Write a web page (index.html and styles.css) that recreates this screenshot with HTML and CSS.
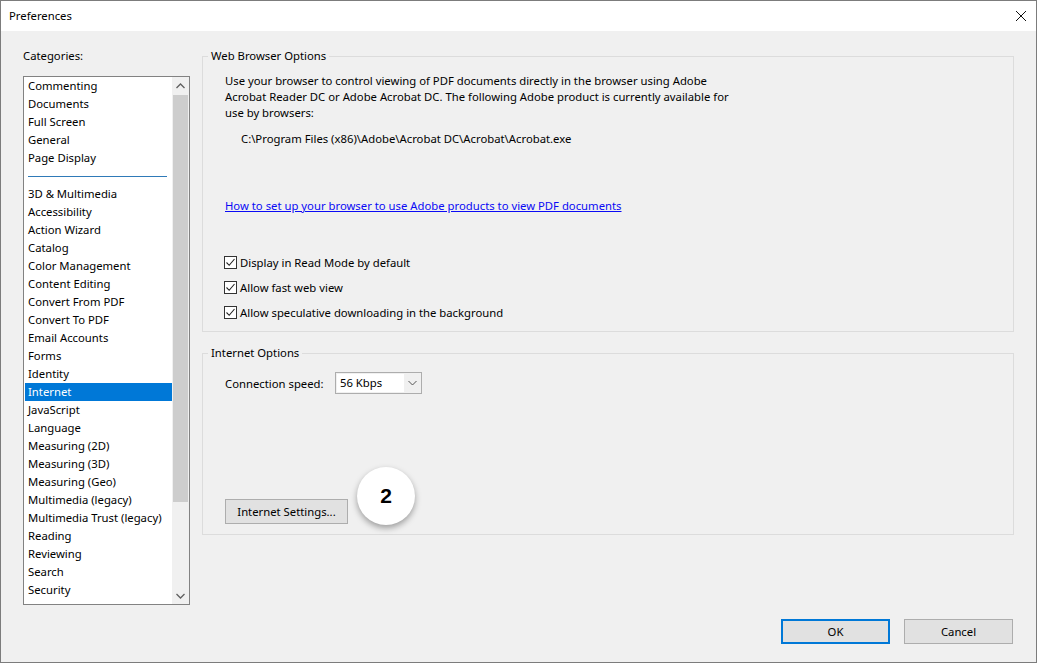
FILE: index.html
```html
<!DOCTYPE html>
<html>
<head>
<meta charset="utf-8">
<link rel="stylesheet" href="styles.css">
</head>
<body>
<div class="window">
  <div class="titlebar">
    <span class="title">Preferences</span>
    <svg class="close" width="12" height="12" viewBox="0 0 12 12"><path d="M1 1 L11 11 M11 1 L1 11" stroke="#111" stroke-width="1" fill="none"/></svg>
  </div>
  <div class="main">
    <div class="leftcol">
      <div class="cat-label">Categories:</div>
      <div class="listbox">
        <div class="items">
          <div class="item">Commenting</div>
          <div class="item">Documents</div>
          <div class="item">Full Screen</div>
          <div class="item">General</div>
          <div class="item">Page Display</div>
          <div class="sep"></div>
          <div class="item">3D &amp; Multimedia</div>
          <div class="item">Accessibility</div>
          <div class="item">Action Wizard</div>
          <div class="item">Catalog</div>
          <div class="item">Color Management</div>
          <div class="item">Content Editing</div>
          <div class="item">Convert From PDF</div>
          <div class="item">Convert To PDF</div>
          <div class="item">Email Accounts</div>
          <div class="item">Forms</div>
          <div class="item">Identity</div>
          <div class="item selected">Internet</div>
          <div class="item">JavaScript</div>
          <div class="item">Language</div>
          <div class="item">Measuring (2D)</div>
          <div class="item">Measuring (3D)</div>
          <div class="item">Measuring (Geo)</div>
          <div class="item">Multimedia (legacy)</div>
          <div class="item">Multimedia Trust (legacy)</div>
          <div class="item">Reading</div>
          <div class="item">Reviewing</div>
          <div class="item">Search</div>
          <div class="item">Security</div>
          <div class="item">Security (Enhanced)</div>
        </div>
        <div class="scrollbar">
          <div class="arrow"><svg width="9" height="6" viewBox="0 0 9 6"><path d="M0.5 5 L4.5 1 L8.5 5" stroke="#606060" stroke-width="1.3" fill="none"/></svg></div>
          <div class="track"><div class="thumb"></div></div>
          <div class="arrow"><svg width="9" height="6" viewBox="0 0 9 6"><path d="M0.5 1 L4.5 5 L8.5 1" stroke="#606060" stroke-width="1.3" fill="none"/></svg></div>
        </div>
      </div>
    </div>
    <div class="rightcol">
      <fieldset class="group group-web">
        <legend>Web Browser Options</legend>
        <p class="desc">Use your browser to control viewing of PDF documents directly in the browser using Adobe<br>Acrobat Reader DC or Adobe Acrobat DC. The following Adobe product is currently available for<br>use by browsers:</p>
        <p class="path">C:\Program Files (x86)\Adobe\Acrobat DC\Acrobat\Acrobat.exe</p>
        <a class="link" href="#">How to set up your browser to use Adobe products to view PDF documents</a>
        <div class="checks">
          <label class="check"><span class="box"><svg width="11" height="11" viewBox="0 0 11 11"><path d="M1.5 5.5 L4.2 8.3 L9.5 2" stroke="#222" stroke-width="1.1" fill="none"/></svg></span>Display in Read Mode by default</label>
          <label class="check"><span class="box"><svg width="11" height="11" viewBox="0 0 11 11"><path d="M1.5 5.5 L4.2 8.3 L9.5 2" stroke="#222" stroke-width="1.1" fill="none"/></svg></span>Allow fast web view</label>
          <label class="check"><span class="box"><svg width="11" height="11" viewBox="0 0 11 11"><path d="M1.5 5.5 L4.2 8.3 L9.5 2" stroke="#222" stroke-width="1.1" fill="none"/></svg></span>Allow speculative downloading in the background</label>
        </div>
      </fieldset>
      <fieldset class="group group-inet">
        <legend>Internet Options</legend>
        <div class="speed-row">
          <span class="speed-label">Connection speed:</span>
          <div class="select">
            <span class="select-val">56 Kbps</span>
            <span class="select-arrow"><svg width="9" height="6" viewBox="0 0 9 6"><path d="M0.5 1 L4.5 5 L8.5 1" stroke="#555" stroke-width="1" fill="none"/></svg></span>
          </div>
        </div>
        <div class="settings-row">
          <button class="btn btn-settings">Internet Settings...</button>
          <div class="badge">2</div>
        </div>
      </fieldset>
    </div>
  </div>
  <div class="footer">
    <button class="btn btn-ok">OK</button>
    <button class="btn btn-cancel">Cancel</button>
  </div>
</div>
</body>
</html>
```
FILE: styles.css
```css
html, body {
  margin: 0;
  padding: 0;
  background: #f0f0f0;
}
.window {
  width: 1037px;
  height: 663px;
  box-sizing: border-box;
  border: 1px solid #7c7c7c;
  background: #f0f0f0;
  display: flex;
  flex-direction: column;
  font-family: "Noto Sans", "Open Sans", sans-serif;
  font-size: 11.3px;
  color: #000;
  overflow: hidden;
}
.titlebar {
  height: 30px;
  background: #fff;
  display: flex;
  align-items: center;
  justify-content: space-between;
  padding: 0 9px 0 8px;
  flex-shrink: 0;
}
.title {
  line-height: 16px;
}
.main {
  display: flex;
  padding: 17px 22px 0 22px;
  gap: 12px;
}
.leftcol {
  width: 167px;
  flex-shrink: 0;
}
.cat-label {
  line-height: 16px;
  margin-bottom: 12px;
}
.listbox {
  height: 529px;
  box-sizing: border-box;
  border: 1px solid #828282;
  background: #fff;
  display: flex;
  overflow: hidden;
}
.items {
  flex: 1;
  overflow: hidden;
  padding-left: 1px;
}
.item {
  height: 18px;
  line-height: 18px;
  padding-left: 3px;
  white-space: nowrap;
}
.item.selected {
  background: #0078d7;
  color: #fff;
}
.sep {
  height: 18px;
  display: flex;
  align-items: center;
  padding-left: 3px;
  padding-right: 3px;
}
.sep::before {
  content: "";
  display: block;
  width: 139px;
  height: 1px;
  background: #2f7ab8;
}
.scrollbar {
  width: 17px;
  flex-shrink: 0;
  background: #f0f0f0;
  display: flex;
  flex-direction: column;
}
.arrow {
  height: 17px;
  display: flex;
  align-items: center;
  justify-content: center;
}
.track {
  flex: 1;
  padding: 1px 1px 0 1px;
}
.thumb {
  height: 407px;
  background: #cdcdcd;
}
.rightcol {
  flex: 1;
  display: flex;
  flex-direction: column;
  gap: 13px;
}
.group {
  margin: 0;
  border: 1px solid #dcdcdc;
  padding: 0 10px 0 22px;
  min-width: 0;
}
.group legend {
  padding: 0 3px;
  margin-left: -17px;
  line-height: 16px;
}
.desc {
  margin: 9px 0 0 0;
  line-height: 16px;
}
.path {
  margin: 10px 0 0 16px;
  line-height: 16px;
}
.link {
  display: block;
  margin-top: 51px;
  line-height: 16px;
  color: #0a0af5;
  text-decoration: underline;
  width: max-content;
}
.checks {
  margin-top: 36px;
  padding-bottom: 6px;
  display: flex;
  flex-direction: column;
}
.check {
  height: 25px;
  display: flex;
  align-items: center;
  margin-left: -1px;
}
.box {
  width: 13px;
  height: 13px;
  box-sizing: border-box;
  border: 1px solid #333;
  background: #fff;
  margin-right: 3px;
  display: flex;
  align-items: center;
  justify-content: center;
}
.speed-row {
  margin-top: 11px;
  display: flex;
  align-items: center;
  height: 22px;
}
.speed-label {
  width: 110px;
}
.select {
  width: 87px;
  height: 22px;
  box-sizing: border-box;
  border: 1px solid #adadad;
  background: #f0f0f0;
  display: flex;
}
.select-val {
  flex: 1;
  background: #fff;
  margin: 1px 0 1px 1px;
  padding-left: 3px;
  line-height: 18px;
}
.select-arrow {
  width: 17px;
  display: flex;
  align-items: center;
  justify-content: center;
}
.settings-row {
  margin-top: 105px;
  padding-bottom: 10px;
  position: relative;
  height: 25px;
}
.btn {
  font-family: "Noto Sans", "Open Sans", sans-serif;
  font-size: 11.3px;
  color: #000;
  background: #e1e1e1;
  border: 1px solid #adadad;
  height: 25px;
  padding: 0;
  box-sizing: border-box;
}
.btn-settings {
  width: 123px;
}
.badge {
  position: absolute;
  left: 132px;
  top: -32px;
  width: 58px;
  height: 58px;
  border-radius: 50%;
  background: #fff;
  box-shadow: 0 3px 6px rgba(0,0,0,0.35);
  display: flex;
  align-items: center;
  justify-content: center;
  font-family: "Liberation Sans", Arial, sans-serif;
  font-weight: bold;
  font-size: 21px;
}
.footer {
  margin-top: auto;
  display: flex;
  justify-content: flex-end;
  gap: 14px;
  padding: 0 23px 18px 0;
}
.btn-ok {
  width: 109px;
  border: 2px solid #0078d7;
}
.btn-cancel {
  width: 109px;
}
```
